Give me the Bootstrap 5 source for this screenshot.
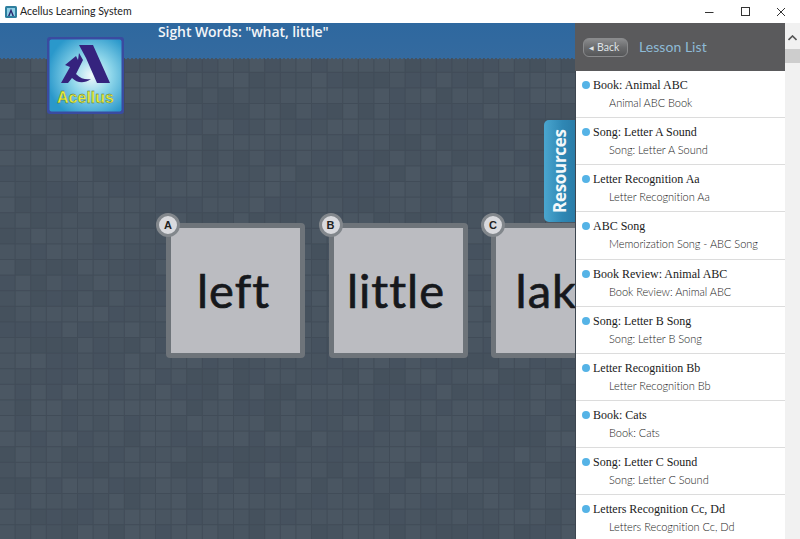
<!DOCTYPE html>
<html lang="en">
<head>
<meta charset="utf-8">
<title>Acellus Learning System</title>
<link href="https://cdn.jsdelivr.net/npm/bootstrap@5.3.0/dist/css/bootstrap.min.css" rel="stylesheet">
<style>
html,body{height:539px;overflow:hidden;background:#fff}
.win-bar{height:23px;background:#fff;font:11px/23px "Lato",sans-serif;color:#222;padding-left:5px;gap:3px}
.win-title{font-size:10.6px}
.win-ctl{width:36px;height:23px}
.win-ctls{padding-right:1px}
.win-body{height:516px;overflow:hidden;background:#46525f}
.stage{width:575px;position:relative;overflow:hidden;flex:none;background-color:#414c58}
.tile-bg{position:absolute;left:0;top:0}
.stage-head{height:35px;background:linear-gradient(#2e689f,#346a9f);position:relative;padding-left:158px;
 font:600 14px/18px "Open Sans",sans-serif;color:#f2f5f8;letter-spacing:-.08px}
.stage-head::after{content:"";position:absolute;left:0;right:0;top:35px;height:2px;
 background:radial-gradient(circle at 2px 0,#346a9f 1.4px,transparent 1.6px) 0 0/4px 2px repeat-x}
.logo-mark{position:absolute;left:46px;top:13px;width:79px;height:79px}
.tab-res{position:absolute;left:544px;top:97px;width:31px;height:102px;
 background:linear-gradient(90deg,#2a7ca8,#2f87b4 40%,#4aa6cf);color:#f4f8fa;
 font:700 17px/31px "Open Sans",sans-serif;writing-mode:vertical-rl;transform:rotate(180deg);text-align:center;border-radius:0 5px 5px 0;letter-spacing:-.3px}
.cards-row{position:relative;padding:165px 0 0 166px;gap:23.5px}
.word-tile{position:relative;flex:none;width:139px;height:135px;padding-right:4px;background:#bbbcc1;border:5.5px solid #6e747a;border-radius:4px;
 font:400 47px/1 "Lato",sans-serif;color:#16181c;letter-spacing:1px;-webkit-text-stroke:.7px #16181c}
.word-txt{white-space:nowrap}
.tile-tag{position:absolute;left:-15px;top:-15px;width:24px;height:24px;border-radius:50%;background:#d9dade;border:3px solid #82878c;
 font:700 11px/18px "Liberation Sans",sans-serif;color:#222;text-align:center;letter-spacing:0;-webkit-text-stroke:0}
.side-panel{width:210px;flex:none;background:#fff;border-left:1px solid #3d4650}
.side-head{height:48px;background:#5a5a5c;margin-left:-1px;padding-left:8px;gap:11px}
.back-pill{width:45px;height:19px;border-radius:6px;border:1px solid #8a8b8d;background:linear-gradient(#8b8c8e,#6a6b6d 50%,#565759);color:#dfe3e6;
 font:400 10.5px/17px "Lato",sans-serif;padding-left:5px}
.back-tri{font-size:6px;vertical-align:1px;margin-right:3px}
.side-title{font:400 14px/1 "Lato",sans-serif;color:#8ebad6;letter-spacing:.05px}
.lesson{height:47.15px;border-bottom:1px solid #dcdcdc;padding:7px 0 0 6px;background:#fff}
.lesson-a{font:400 12px/15px "Liberation Serif",serif;color:#1a1a1a}
.lesson-dot{display:inline-block;width:8px;height:8px;border-radius:50%;background:#55b3e6;margin-right:3px}
.lesson-b{font:300 11px/19px "Lato",sans-serif;color:#222;padding-left:27px;letter-spacing:-.04px}
.scroll-col{width:15px;flex:none;background:#f1f1f1;position:relative}
.scroll-thumb{height:14px;background:#cdcdcd;margin-top:26px}
.scroll-up{position:absolute;left:3px;top:12px}
</style>
</head>
<body>
<div class="win-bar d-flex align-items-center">
 <svg width="12" height="12" viewBox="0 0 12 12"><rect width="12" height="12" rx="1.5" fill="#2f7f9f"/><rect x="2" y="2" width="8" height="8" fill="#8fd0e6"/><path d="M3 10 6 2.5 9 10H7.4L6 6.2 4.6 10Z" fill="#2c2a6e"/></svg>
 <span class="win-title flex-grow-1">Acellus Learning System</span>
 <div class="d-flex win-ctls">
  <div class="win-ctl d-flex align-items-center justify-content-center"><svg width="10" height="10"><path d="M1 5.5H9.5" stroke="#333"/></svg></div>
  <div class="win-ctl d-flex align-items-center justify-content-center"><svg width="10" height="10"><rect x="1.5" y=".5" width="8" height="8" fill="none" stroke="#333"/></svg></div>
  <div class="win-ctl d-flex align-items-center justify-content-center"><svg width="10" height="10"><path d="M1 1 9 9M9 1 1 9" stroke="#333"/></svg></div>
 </div>
</div>
<div class="win-body d-flex">
 <div class="stage">
  <svg class="tile-bg" id="tiles" width="575" height="516"></svg>
  <div class="stage-head">Sight Words: "what, little"</div>
  <div class="d-flex cards-row">
   <div class="word-tile d-flex align-items-center justify-content-center"><span class="tile-tag">A</span><span class="word-txt">left</span></div>
   <div class="word-tile d-flex align-items-center justify-content-center"><span class="tile-tag">B</span><span class="word-txt">little</span></div>
   <div class="word-tile d-flex align-items-center justify-content-center"><span class="tile-tag">C</span><span class="word-txt">lake</span></div>
  </div>
  <svg class="logo-mark" viewBox="0 0 79 79">
   <defs>
    <radialGradient id="lg" cx=".58" cy=".5" r=".62"><stop offset="0" stop-color="#f2fafb"/><stop offset=".45" stop-color="#8ed6ea"/><stop offset="1" stop-color="#2a98cb"/></radialGradient>
   </defs>
   <rect x="1" y="1" width="77" height="77" rx="3" fill="#3a4ba0"/>
   <rect x="3.5" y="3.5" width="72" height="72" rx="2" fill="url(#lg)"/>
   <path d="M33 9H47L64 47H51L40 22Z" fill="#35237e"/>
   <path d="M33 17 37 24 30 38C35 43 40 44 45 43 38 48 31 47 26 42L22 47H15L24 31 19 29 30 20 32 24Z" fill="#35237e"/>
   <text x="39.5" y="67" text-anchor="middle" font-family="Liberation Sans,sans-serif" font-weight="700" font-size="16" fill="#eaee3a" stroke="#3c5a3a" stroke-width=".3">Acellus</text>
  </svg>
  <div class="tab-res">Resources</div>
 </div>
 <div class="side-panel">
  <div class="side-head d-flex align-items-center">
   <div class="back-pill"><span class="back-tri">&#9664;</span>Back</div>
   <div class="side-title">Lesson List</div>
  </div>
  <div class="lesson"><div class="lesson-a"><span class="lesson-dot"></span>Book: Animal ABC</div><div class="lesson-b">Animal ABC Book</div></div>
  <div class="lesson"><div class="lesson-a"><span class="lesson-dot"></span>Song: Letter A Sound</div><div class="lesson-b">Song: Letter A Sound</div></div>
  <div class="lesson"><div class="lesson-a"><span class="lesson-dot"></span>Letter Recognition Aa</div><div class="lesson-b">Letter Recognition Aa</div></div>
  <div class="lesson"><div class="lesson-a"><span class="lesson-dot"></span>ABC Song</div><div class="lesson-b">Memorization Song - ABC Song</div></div>
  <div class="lesson"><div class="lesson-a"><span class="lesson-dot"></span>Book Review: Animal ABC</div><div class="lesson-b">Book Review: Animal ABC</div></div>
  <div class="lesson"><div class="lesson-a"><span class="lesson-dot"></span>Song: Letter B Song</div><div class="lesson-b">Song: Letter B Song</div></div>
  <div class="lesson"><div class="lesson-a"><span class="lesson-dot"></span>Letter Recognition Bb</div><div class="lesson-b">Letter Recognition Bb</div></div>
  <div class="lesson"><div class="lesson-a"><span class="lesson-dot"></span>Book: Cats</div><div class="lesson-b">Book: Cats</div></div>
  <div class="lesson"><div class="lesson-a"><span class="lesson-dot"></span>Song: Letter C Sound</div><div class="lesson-b">Song: Letter C Sound</div></div>
  <div class="lesson"><div class="lesson-a"><span class="lesson-dot"></span>Letters Recognition Cc, Dd</div><div class="lesson-b">Letters Recognition Cc, Dd</div></div>
 </div>
 <div class="scroll-col">
  <svg class="scroll-up" width="9" height="6"><path d="M.5 5 4.5 1 8.5 5" fill="none" stroke="#555" stroke-width="1.6"/></svg>
  <div class="scroll-thumb"></div>
 </div>
</div>
<script>
(function(){
 var s=document.getElementById('tiles'),h='',seed=7;
 function r(){seed=(seed*16807)%2147483647;return seed/2147483647;}
 var shades=['#46525f','#47535f','#495561','#4b5763','#45515d','#4a5662'];
 for(var y=0;y<33;y++)for(var x=0;x<37;x++){
  h+='<rect x="'+(x*15.6)+'" y="'+(y*15.6+3)+'" width="14.6" height="14.6" fill="'+shades[Math.floor(r()*shades.length)]+'"/>';
 }
 s.innerHTML=h;
})();
</script>
</body>
</html>
